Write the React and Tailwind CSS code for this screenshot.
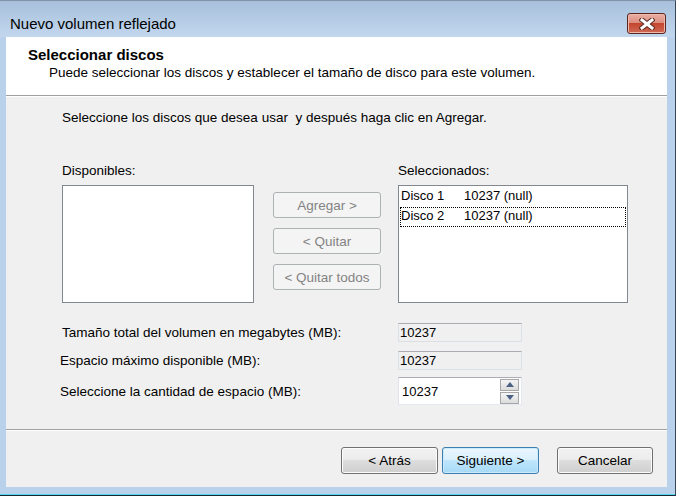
import React from "react";

const sysBtn =
  "h-[27px] rounded-[3px] border border-[#707070] bg-[linear-gradient(to_bottom,#f2f2f2_0%,#ebebeb_50%,#dddddd_50%,#cfcfcf_100%)] shadow-[inset_0_0_0_1px_#fcfcfc] text-[13.5px] text-black flex items-center justify-center";

const disabledBtn =
  "w-[108px] h-[26px] rounded-[3px] border border-[#adb2b5] bg-[#f4f4f4] text-[13.5px] text-[#838383] flex items-center justify-center";

const CloseIcon = () => (
  <svg width="16" height="12" viewBox="0 0 16 12">
    <path d="M3 2 L13 10 M13 2 L3 10" stroke="#5a2a24" strokeWidth="5" strokeLinecap="square" />
    <path d="M3 2 L13 10 M13 2 L3 10" stroke="#ffffff" strokeWidth="3" strokeLinecap="square" />
  </svg>
);

const Arrow = ({ up }) => (
  <svg width="8" height="5" viewBox="0 0 8 5">
    <path d={up ? "M0 5 L4 0 L8 5 Z" : "M0 0 L8 0 L4 5 Z"} fill="#4d6185" />
  </svg>
);

const Disk = ({ name, size, focused }) => (
  <div
    className={
      "mx-px h-[20px] flex items-start text-[13px] " +
      (focused ? "border border-dotted border-black" : "border border-transparent")
    }
  >
    <span className="w-[63px]">{name}</span>
    <span>{size}</span>
  </div>
);

export default function App() {
  return (
    <div className="w-[677px] h-[496px] bg-white font-['Liberation_Sans',Arial,sans-serif] text-[13.5px] text-black leading-[15px]">
      <div className="w-[676px] h-[496px] flex flex-col bg-[#b9d1ea] border-t border-t-[#8193a8] border-r border-r-[#36475a] border-b border-b-[#1a2633] shadow-[inset_0_-1px_0_#52d7ef]">
        {/* Title bar */}
        <div className="h-[36px] flex items-start bg-[linear-gradient(to_bottom,#a8c0dc,#c2d7ee)] pl-[10px] pr-[9px]">
          <span className="mt-[14px] text-[15px] leading-[17px] text-black">Nuevo volumen reflejado</span>
          <div className="ml-auto mt-[12px] w-[39px] h-[21px] rounded-[3px] border border-[#5b2520] bg-[linear-gradient(to_bottom,#eab0a6_0%,#dc8f80_45%,#c5462f_50%,#cf6a56_100%)] shadow-[inset_0_0_0_1px_#f0b9ae] flex items-center justify-center">
            <CloseIcon />
          </div>
        </div>

        <div className="flex-1 pl-[6px] pr-[8px] pb-[8px] flex">
          <div className="flex-1 flex flex-col bg-[#f0f0f0]">
            {/* Header */}
            <div className="h-[58px] bg-white pl-[22px] pt-[9px]">
              <div className="font-bold text-[15px] leading-[17px]">Seleccionar discos</div>
              <div className="pl-[21px] mt-[2px]">Puede seleccionar los discos y establecer el tamaño de disco para este volumen.</div>
            </div>
            <div className="h-px bg-[#a0a0a0]" />
            <div className="h-px bg-white" />

            {/* Body */}
            <div className="flex-1 pl-[56px] pt-[13px]">
              <div className="whitespace-pre">Seleccione los discos que desea usar  y después haga clic en Agregar.</div>

              <div className="flex items-start mt-[38px]">
                <div className="w-[192px]">
                  <div className="mb-[7px]">Disponibles:</div>
                  <div className="h-[118px] bg-white border border-[#828790]" />
                </div>
                <div className="ml-[19px] mt-[29px] flex flex-col gap-[10px]">
                  <div className={disabledBtn}>Agregar &gt;</div>
                  <div className={disabledBtn}>&lt; Quitar</div>
                  <div className={disabledBtn}>&lt; Quitar todos</div>
                </div>
                <div className="ml-[17px] w-[230px]">
                  <div className="mb-[7px]">Seleccionados:</div>
                  <div className="h-[118px] bg-white border border-[#828790] pt-px">
                    <Disk name="Disco 1" size="10237 (null)" />
                    <Disk name="Disco 2" size="10237 (null)" focused />
                  </div>
                </div>
              </div>

              <div className="mt-[20px] flex flex-col">
                <div className="flex items-center h-[19px]">
                  <span className="w-[336px]">Tamaño total del volumen en megabytes (MB):</span>
                  <div className="w-[124px] h-[19px] bg-[#f0f0f0] border border-[#dbdfe6] border-t-[#abadb3] pl-[1px] flex items-center text-[13px]">10237</div>
                </div>
                <div className="flex items-center h-[19px] mt-[9px]">
                  <span className="w-[336px] -ml-[2px]">Espacio máximo disponible (MB):</span>
                  <div className="ml-[2px] w-[124px] h-[19px] bg-[#f0f0f0] border border-[#dbdfe6] border-t-[#abadb3] pl-[1px] flex items-center text-[13px]">10237</div>
                </div>
                <div className="flex items-center h-[28px] mt-[7px]">
                  <span className="w-[336px] -ml-[2px]">Seleccione la cantidad de espacio (MB):</span>
                  <div className="ml-[2px] w-[124px] h-[28px] bg-white border border-[#e3e9ef] border-t-[#abadb3] border-l-[#e2e3ea] flex items-center">
                    <span className="pl-[3px] flex-1 text-[13px]">10237</span>
                    <div className="w-[19px] mr-[2px] flex flex-col gap-px">
                      <div className="h-[12px] border border-[#a7a7a7] bg-[linear-gradient(to_bottom,#f5f5f5,#dcdcdc)] flex items-center justify-center">
                        <Arrow up />
                      </div>
                      <div className="h-[12px] border border-[#a7a7a7] bg-[linear-gradient(to_bottom,#f5f5f5,#dcdcdc)] flex items-center justify-center">
                        <Arrow />
                      </div>
                    </div>
                  </div>
                </div>
              </div>
            </div>

            {/* Footer */}
            <div className="h-px bg-[#a0a0a0]" />
            <div className="h-px bg-white" />
            <div className="h-[56px] flex items-start justify-end pt-[16px] pr-[14px]">
              <div className={sysBtn + " w-[97px]"}>&lt; Atrás</div>
              <div className="ml-[4px] w-[97px] h-[27px] rounded-[3px] border border-[#3c7fb1] bg-[linear-gradient(to_bottom,#eaf6fd_0%,#d9f0fc_50%,#bee6fd_50%,#a7d9f5_100%)] shadow-[inset_0_0_0_1px_#cbeafb] flex items-center justify-center">
                Siguiente &gt;
              </div>
              <div className={sysBtn + " ml-[18px] w-[96px]"}>Cancelar</div>
            </div>
          </div>
        </div>
      </div>
    </div>
  );
}
